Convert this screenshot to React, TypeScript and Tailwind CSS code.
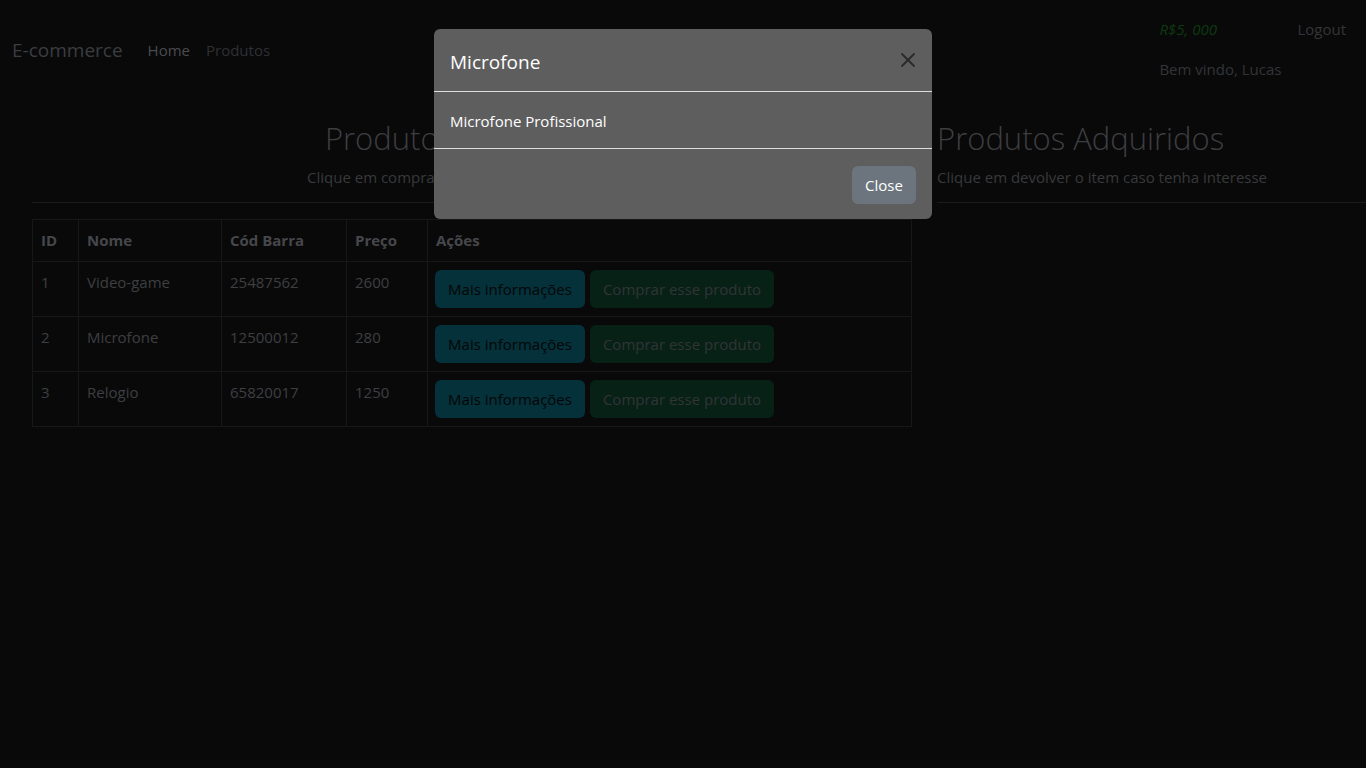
import { X } from "lucide-react";

type Product = {
  id: number;
  nome: string;
  codBarra: string;
  preco: number;
};

const products: Product[] = [
  { id: 1, nome: "Video-game", codBarra: "25487562", preco: 2600 },
  { id: 2, nome: "Microfone", codBarra: "12500012", preco: 280 },
  { id: 3, nome: "Relogio", codBarra: "65820017", preco: 1250 },
];

function Navbar() {
  return (
    <nav className="flex h-[100px] items-start justify-between">
      <div className="flex items-center pt-[36px] pl-[12px]">
        <span className="mr-[25px] text-[19px] leading-[28px] text-[#3b3d40]">E-commerce</span>
        <a className="mr-[16px] text-[15px] leading-[24px] text-[#4a4c4f]">Home</a>
        <a className="text-[15px] leading-[24px] text-[#2e3033]">Produtos</a>
      </div>
      <div className="flex flex-col pt-[17px] pr-[20px] text-[15px]">
        <div className="flex items-center">
          <span className="w-[138px] italic leading-[24px] text-[#0e3a10]">R$5, 000</span>
          <a className="leading-[24px] text-[#333537]">Logout</a>
        </div>
        <span className="mt-[16px] leading-[24px] text-[#333537]">Bem vindo, Lucas</span>
      </div>
    </nav>
  );
}

function ProductTable() {
  return (
    <table className="w-full border-collapse text-[15px] text-[#3e3f41]">
      <thead>
        <tr className="h-[42px]">
          <th className="w-[46px] border border-[#161719] px-[8px] text-left font-bold text-[#46474a]">ID</th>
          <th className="w-[143px] border border-[#161719] px-[8px] text-left font-bold text-[#46474a]">Nome</th>
          <th className="w-[125px] border border-[#161719] px-[8px] text-left font-bold text-[#46474a]">Cód Barra</th>
          <th className="w-[81px] border border-[#161719] px-[8px] text-left font-bold text-[#46474a]">Preço</th>
          <th className="border border-[#161719] px-[8px] text-left font-bold text-[#46474a]">Ações</th>
        </tr>
      </thead>
      <tbody>
        {products.map((p) => (
          <tr key={p.id} className="h-[55px]">
            <td className="border border-[#161719] px-[8px] pt-[9px] align-top">{p.id}</td>
            <td className="border border-[#161719] px-[8px] pt-[9px] align-top">{p.nome}</td>
            <td className="border border-[#161719] px-[8px] pt-[9px] align-top">{p.codBarra}</td>
            <td className="border border-[#161719] px-[8px] pt-[9px] align-top">{p.preco}</td>
            <td className="border border-[#161719] pr-[8px] pl-[7px] align-middle">
              <div className="flex gap-[5px]">
                <button className="h-[38px] w-[150px] rounded-[6px] bg-[#04313a] text-[15px] text-[#050607]">
                  Mais informações
                </button>
                <button className="h-[38px] w-[184px] rounded-[6px] bg-[#072116] text-[15px] text-[#323436]">
                  Comprar esse produto
                </button>
              </div>
            </td>
          </tr>
        ))}
      </tbody>
    </table>
  );
}

function Modal() {
  return (
    <div className="fixed top-[29px] left-[434px] w-[498px] rounded-[6px] bg-[#5e5e5e] text-white">
      <div className="flex h-[63px] items-center justify-between border-b border-[#dedede] px-[16px]">
        <h5 className="pt-[3px] text-[19px] leading-[30px]">Microfone</h5>
        <button className="mr-[-4px] flex h-[24px] w-[24px] items-center justify-center text-[#2a2a2a]">
          <X size={26} strokeWidth={1.8} />
        </button>
      </div>
      <div className="flex h-[57px] items-center border-b border-[#dedede] px-[16px]">
        <p className="pt-[2px] text-[15px] leading-[24px]">Microfone Profissional</p>
      </div>
      <div className="flex h-[70px] items-center justify-end px-[16px]">
        <button className="mt-[2px] h-[38px] w-[64px] rounded-[6px] bg-[#6c757d] text-[15px] text-white">Close</button>
      </div>
    </div>
  );
}

export default function App() {
  return (
    <div className="min-h-[768px] bg-[#09090a] font-['Open_Sans',sans-serif]">
      <Navbar />
      <div className="flex pl-[32px]">
        <section className="w-[880px]">
          <div className="text-center">
            <h2 className="pt-[18px] text-[31px] leading-[40px] font-light text-[#3d3e40]">Produtos Disponíveis</h2>
            <p className="mt-[7px] text-[15px] leading-[24px] text-[#38393b]">
              Clique em comprar o item caso tenha interesse
            </p>
          </div>
          <hr className="mt-[13px] mb-[16px] border-t border-[#1b1b1c]" />
          <ProductTable />
        </section>
        <section className="ml-[25px] flex-1">
          <h2 className="pt-[18px] text-[31px] leading-[40px] font-light text-[#3d3e40]">Produtos Adquiridos</h2>
          <p className="mt-[7px] text-[15px] leading-[24px] text-[#38393b]">
            Clique em devolver o item caso tenha interesse
          </p>
          <hr className="mt-[13px] border-t border-[#1b1b1c]" />
        </section>
      </div>
      <Modal />
    </div>
  );
}
